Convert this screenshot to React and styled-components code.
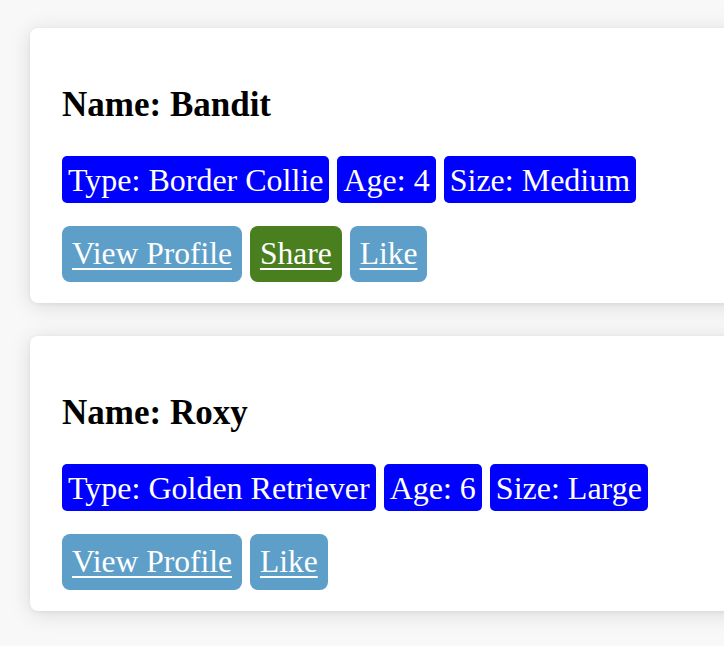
import React from 'react'
import styled, { createGlobalStyle } from 'styled-components'

const GlobalStyle = createGlobalStyle`
    html {
        overflow: hidden;
    }
    body {
        margin: 0;
        padding: 0;
        background: #f8f8f8;
        font-family: "Liberation Serif", "Times New Roman", serif;
    }
`

const StyledPage = styled.div`
    display: flex;
    flex-direction: column;
    gap: 33px;
    padding: 28px 0 40px 30px;
`

const StyledCard = styled.div`
    width: 760px;
    background: white;
    border-radius: 8px;
    padding: 21px 32px;
    box-sizing: border-box;
    box-shadow: 0 3px 22px rgba(0, 0, 0, 0.12), 0 1px 4px rgba(0, 0, 0, 0.06);
`

const StyledName = styled.h3`
    margin: 36px 0 31px;
    font-size: 35px;
    line-height: 40px;
    font-weight: bold;
    color: black;
`

const StyledRow = styled.div`
    display: flex;
    gap: 8px;
    margin-bottom: ${props => props.spacing || 0}px;
`

const StyledBadge = styled.span`
    background: #0000ff;
    color: white;
    font-size: 32px;
    line-height: 36px;
    padding: 5.5px 6px;
    border-radius: 5px;
`

const StyledButton = styled.a`
    background: ${props => props.green ? '#4a7f1f' : '#5d9fc9'};
    color: white;
    font-size: 31.5px;
    line-height: 36px;
    padding: 10px;
    border-radius: 8px;
    text-decoration: underline;
    text-decoration-thickness: 2px;
    text-underline-offset: 4px;
    cursor: pointer;
`

const dogs = [
    { id: 1, name: 'Bandit', type: 'Border Collie', age: 4, size: 'Medium', share: true },
    { id: 2, name: 'Roxy', type: 'Golden Retriever', age: 6, size: 'Large', share: false }
]

export default function App() {
    return (
        <StyledPage>
            <GlobalStyle />
            {dogs.map(dog => (
                <StyledCard key={dog.id}>
                    <StyledName>Name: {dog.name}</StyledName>
                    <StyledRow spacing={23}>
                        <StyledBadge>Type: {dog.type}</StyledBadge>
                        <StyledBadge>Age: {dog.age}</StyledBadge>
                        <StyledBadge>Size: {dog.size}</StyledBadge>
                    </StyledRow>
                    <StyledRow>
                        <StyledButton>View Profile</StyledButton>
                        {dog.share && <StyledButton green>Share</StyledButton>}
                        <StyledButton>Like</StyledButton>
                    </StyledRow>
                </StyledCard>
            ))}
        </StyledPage>
    )
}
